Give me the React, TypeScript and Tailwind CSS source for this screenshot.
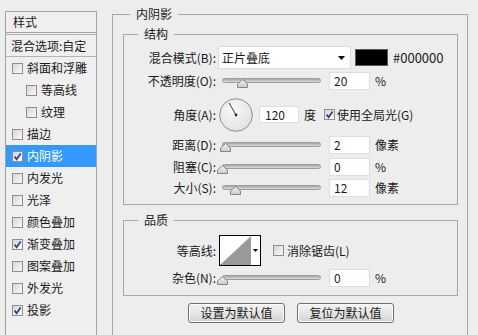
import React from 'react';

type StyleItem = {
  label: string;
  checked?: boolean;
  sub?: boolean;
  active?: boolean;
};

const styleItems: StyleItem[] = [
  { label: '斜面和浮雕' },
  { label: '等高线', sub: true },
  { label: '纹理', sub: true },
  { label: '描边' },
  { label: '内阴影', checked: true, active: true },
  { label: '内发光' },
  { label: '光泽' },
  { label: '颜色叠加' },
  { label: '渐变叠加', checked: true },
  { label: '图案叠加' },
  { label: '外发光' },
  { label: '投影', checked: true },
];

const Checkbox = ({ checked = false }: { checked?: boolean }) => (
  <span className="inline-flex h-[11px] w-[11px] shrink-0 items-center justify-center border border-[#8f8f8f] bg-linear-to-br from-[#d6d6d6] to-[#fafafa]">
    {checked && (
      <svg viewBox="0 0 9 9" className="h-[9px] w-[9px]">
        <path d="M1.6 4.6 L3.6 7.2 L7.6 1.4" fill="none" stroke="#2d3f86" strokeWidth="1.7" />
      </svg>
    )}
  </span>
);

// thumb position is data, so it goes through an inline style
const Slider = ({ left }: { left: number }) => (
  <div className="relative ml-[1px] h-[14px] w-[110px] shrink-0">
    <div className="absolute left-[5px] top-[4px] h-[5px] w-[99px] rounded-full border border-[#9d9d9d] bg-linear-to-b from-[#a6a6a6] to-[#dcdcdc]" />
    <svg className="absolute top-[5px] h-[9px] w-[11px]" style={{ left }} viewBox="0 0 11 9">
      <defs>
        <linearGradient id="thumb" x1="0" y1="0" x2="0" y2="1">
          <stop offset="0" stopColor="#f4f4f4" />
          <stop offset="1" stopColor="#c9c9c9" />
        </linearGradient>
      </defs>
      <polygon points="5.5,0.5 10.5,5 10.5,8.5 0.5,8.5 0.5,5" fill="url(#thumb)" stroke="#858585" strokeWidth="1" />
    </svg>
  </div>
);

const NumberBox = ({ value, width = 'w-[41px]' }: { value: string; width?: string }) => (
  <div className={`ml-[2px] flex h-[18px] ${width} shrink-0 items-center border border-[#dedede] bg-white pl-[4px] text-[12px] leading-[16px]`}>
    {value}
  </div>
);

const Label = ({ children }: { children: React.ReactNode }) => (
  <span className="w-[92px] shrink-0 text-right text-[12px] leading-[16px]">{children}</span>
);

const SliderRow = ({
  label,
  thumb,
  value,
  unit,
  className = 'h-[22px]',
}: {
  label: string;
  thumb: number;
  value: string;
  unit: string;
  className?: string;
}) => (
  <div className={`flex items-center ${className}`}>
    <Label>{label}</Label>
    <Slider left={thumb} />
    <NumberBox value={value} />
    <span className="ml-[5px] text-[12px] leading-[16px]">{unit}</span>
  </div>
);

const Dial = () => (
  <svg viewBox="0 0 34 34" className="ml-[3px] h-[34px] w-[34px] shrink-0">
    <defs>
      <radialGradient id="dial" cx="0.4" cy="0.35" r="0.7">
        <stop offset="0" stopColor="#f7f7f7" />
        <stop offset="1" stopColor="#e2e2e2" />
      </radialGradient>
    </defs>
    <circle cx="17" cy="17" r="16.3" fill="url(#dial)" stroke="#8c8c8c" strokeWidth="1" />
    <line x1="17" y1="17" x2="10" y2="4.9" stroke="#3a3a3a" strokeWidth="1" />
    <circle cx="17" cy="17" r="1.4" fill="#2a2a2a" />
  </svg>
);

const ContourPicker = () => (
  <div className="ml-[3px] flex h-[31px] w-[42px] shrink-0 border border-black bg-white">
    <svg viewBox="0 0 31 29" className="h-[29px] w-[31px]" preserveAspectRatio="none">
      <polygon points="0,29 31,0 31,29" fill="#9a9a9a" />
    </svg>
    <div className="flex flex-1 items-center justify-center">
      <svg viewBox="0 0 5 3" className="h-[3px] w-[5px]">
        <polygon points="0,0 5,0 2.5,3" fill="#000" />
      </svg>
    </div>
  </div>
);

const DialogButton = ({ children }: { children: React.ReactNode }) => (
  <button
    type="button"
    className="flex h-[20px] w-[97px] items-center justify-center rounded-[3px] border border-[#707070] bg-linear-to-b from-[#f4f4f4] via-[#e6e6e6] to-[#d2d2d2] text-[12px] leading-[16px] shadow-[inset_0_0_0_1px_#fbfbfb]"
  >
    {children}
  </button>
);

export default function App() {
  return (
    <div className="flex h-[335px] w-[478px] overflow-hidden bg-[#ededed] font-['Noto_Sans_CJK_SC','Microsoft_YaHei',sans-serif] text-[#1a1a1a]">
      {/* style list */}
      <aside className="ml-[5px] mt-[11px] h-[340px] w-[92px] shrink-0 border border-[#a3a3a3] bg-[#efefef]">
        <div className="h-[21px] border-b border-[#a3a3a3] pl-[7px] text-[12px] leading-[20px]">样式</div>
        <div className="mt-[1px] h-[23px] border-y border-[#b3b3b3] pl-[5px] text-[12px] leading-[21px]">混合选项:自定</div>
        {styleItems.map((item) => (
          <div
            key={item.label}
            className={`flex h-[22px] items-center gap-[4px] text-[12px] leading-[16px] ${item.sub ? 'pl-[20px]' : 'pl-[6px]'} ${item.active ? 'bg-[#3399ff] text-white' : ''}`}
          >
            <Checkbox checked={item.checked} />
            <span>{item.label}</span>
          </div>
        ))}
      </aside>

      {/* settings */}
      <fieldset className="ml-[15px] mt-[6px] h-[345px] w-[356px] shrink-0 border border-[#a8a8a8]">
        <legend className="ml-[17px] px-[6px] text-[12px] leading-[16px]">内阴影</legend>

        <fieldset className="ml-[10px] mt-[4px] w-[335px] border border-[#a8a8a8] pb-[5px]">
          <legend className="ml-[14px] px-[6px] text-[12px] leading-[16px]">结构</legend>

          <div className="mt-[4px] flex h-[23px] items-center">
            <Label>混合模式(B):</Label>
            <div className="ml-[2px] flex h-[23px] w-[133px] shrink-0 items-center justify-between border border-[#dcdcdc] bg-white pl-[3px] pr-[5px] text-[12px] leading-[16px]">
              <span>正片叠底</span>
              <svg viewBox="0 0 7 4" className="h-[4px] w-[7px]">
                <polygon points="0,0 7,0 3.5,4" fill="#000" />
              </svg>
            </div>
            <div className="ml-[4px] h-[17px] w-[33px] shrink-0 border border-[#5a5a5a] bg-black" />
            <span className="ml-[5px] text-[13px] leading-[16px]">#000000</span>
          </div>

          <SliderRow label="不透明度(O):" thumb={20} value="20" unit="%" className="mt-[1px] h-[22px]" />

          <div className="mt-[4px] flex h-[37px] items-center">
            <Label>角度(A):</Label>
            <Dial />
            <div className="ml-[6px] flex h-[17px] w-[40px] shrink-0 items-center border border-[#dedede] bg-white pl-[5px] text-[12px] leading-[16px]">120</div>
            <span className="ml-[5px] text-[12px] leading-[16px]">度</span>
            <span className="ml-[8px] flex items-center">
              <Checkbox checked />
            </span>
            <span className="ml-[2px] text-[12px] leading-[16px]">使用全局光(G)</span>
          </div>

          <SliderRow label="距离(D):" thumb={3} value="2" unit="像素" className="mt-[1px] h-[22px]" />
          <SliderRow label="阻塞(C):" thumb={0} value="0" unit="%" className="h-[21px]" />
          <SliderRow label="大小(S):" thumb={13} value="12" unit="像素" className="h-[22px]" />
        </fieldset>

        <fieldset className="ml-[10px] mt-[7px] w-[335px] border border-[#a8a8a8] pb-[7px]">
          <legend className="ml-[14px] px-[6px] text-[12px] leading-[16px]">品质</legend>

          <div className="mt-[7px] flex h-[31px] items-center">
            <Label>等高线:</Label>
            <ContourPicker />
            <span className="ml-[12px] flex items-center">
              <Checkbox />
            </span>
            <span className="ml-[3px] text-[12px] leading-[16px]">消除锯齿(L)</span>
          </div>

          <SliderRow label="杂色(N):" thumb={0} value="0" unit="%" className="mt-[2px] h-[20px]" />
        </fieldset>

        <div className="ml-[75px] mt-[7px] flex gap-[12px]">
          <DialogButton>设置为默认值</DialogButton>
          <DialogButton>复位为默认值</DialogButton>
        </div>
      </fieldset>
    </div>
  );
}
